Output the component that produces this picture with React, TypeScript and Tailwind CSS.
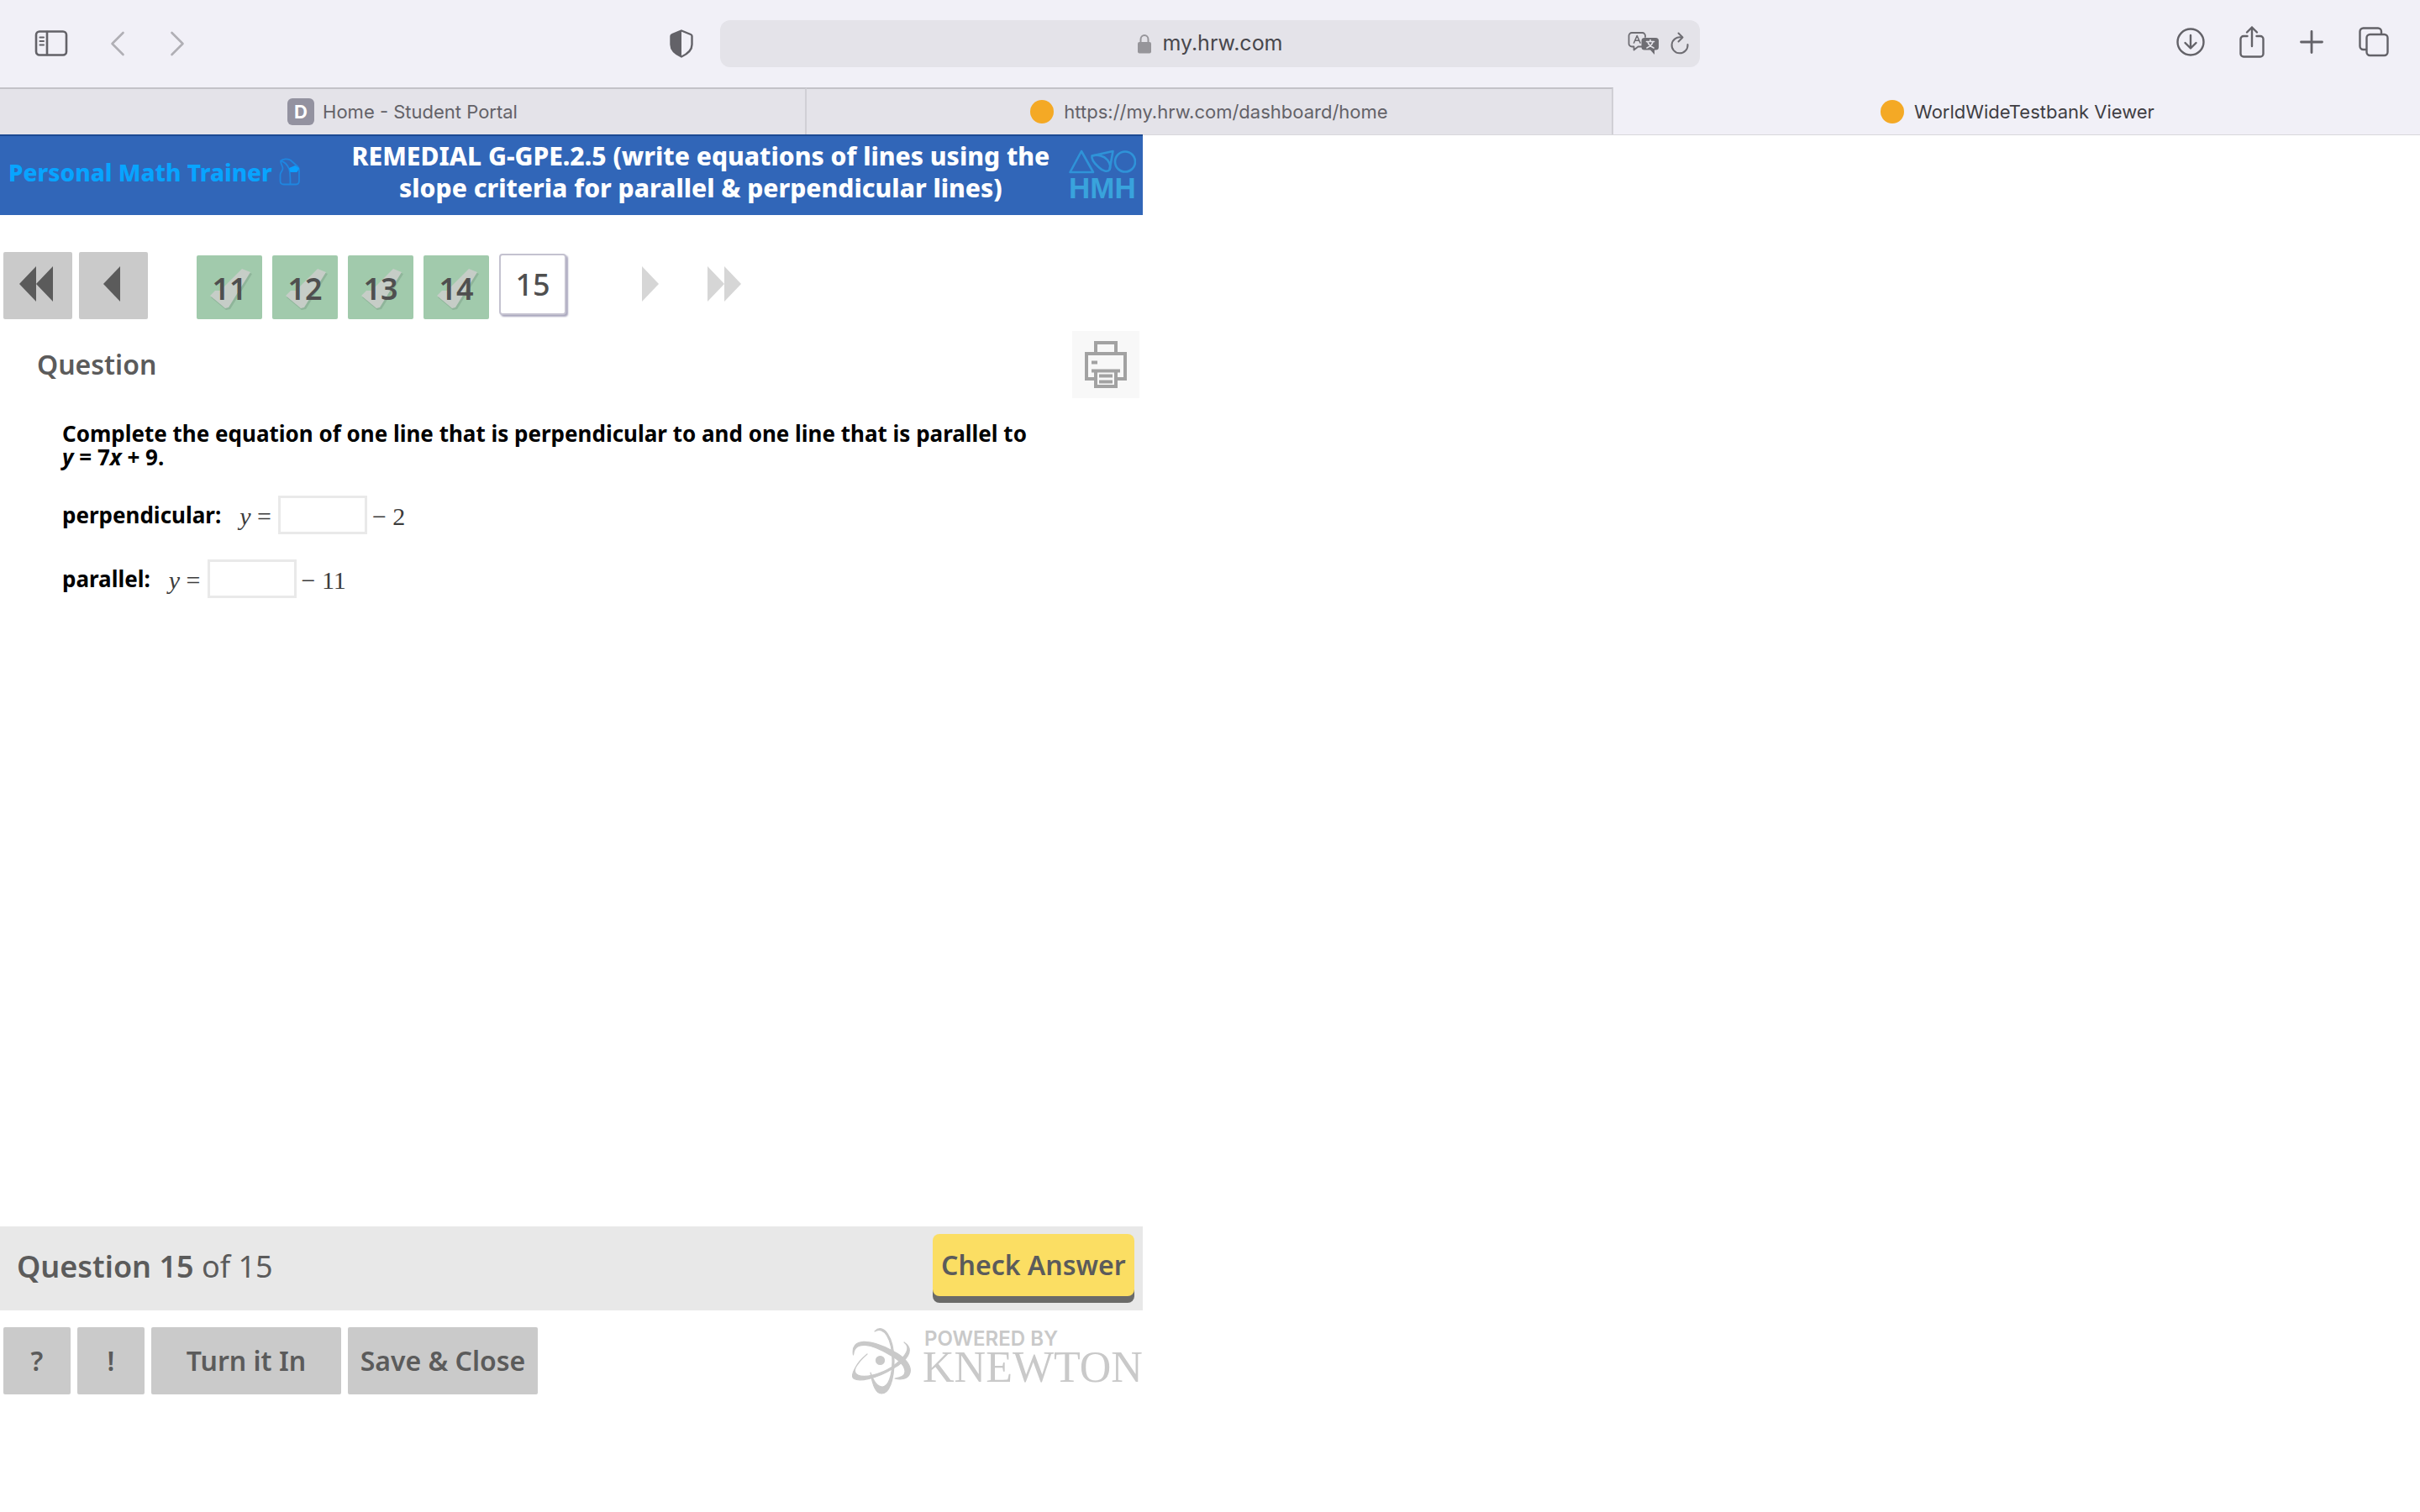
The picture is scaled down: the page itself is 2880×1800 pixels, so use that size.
import React from "react";

const doneQuestions = [11, 12, 13, 14];

function SidebarIcon() {
  return (
    <svg width="40" height="32" viewBox="0 0 40 32" fill="none" stroke="#636268" strokeWidth="2.6" strokeLinecap="round">
      <rect x="2" y="1.5" width="36" height="28" rx="4" />
      <path d="M15 2v27" />
      <path d="M6.500 8.500h4.500M6.500 13h4.500M6.500 17.500h4.500" strokeWidth="2" />
    </svg>
  );
}

function ShieldIcon() {
  return (
    <svg width="28" height="34" viewBox="0 0 28 34">
      <path d="M14 1.500 25 6c1 .4 1.500 1 1.500 2v10c0 7-6 11.500-12.500 14.500C7.500 29.500 1.500 25 1.500 18V8c0-1 .5-1.600 1.500-2z" fill="none" stroke="#636268" strokeWidth="2.4" />
      <path d="M14 1.500V32.500C7.500 29.500 1.500 25 1.500 18V8c0-1 .5-1.600 1.500-2z" fill="#636268" />
    </svg>
  );
}

function LockIcon() {
  return (
    <svg width="18" height="24" viewBox="0 0 18 24">
      <path d="M4.500 11V7a4.500 5 0 0 1 9 0v4" fill="none" stroke="#96959a" strokeWidth="2" />
      <rect x="1" y="10" width="16" height="13.500" rx="2" fill="#96959a" />
    </svg>
  );
}

function TranslateIcon() {
  return (
    <svg width="38" height="28" viewBox="0 0 38 28" fill="none" strokeLinecap="round" strokeLinejoin="round">
      <path d="M17 17.500h-4.500L7.500 21.500v-4H5a3.500 3.500 0 0 1-3.500-3.500V4.500A3.500 3.500 0 0 1 5 1h12.500A3.500 3.500 0 0 1 21 4.500V6" stroke="#6e6d73" strokeWidth="1.800" />
      <path d="M7.500 13 11.200 4.500 15 13M8.800 10.300h4.800" stroke="#6e6d73" strokeWidth="1.600" />
      <path d="M20 7h13.500A3.500 3.500 0 0 1 37 10.500V18a3.500 3.500 0 0 1-3.500 3.500H32V27l-5-5.500h-7a3.500 3.500 0 0 1-3.500-3.500v-7.500A3.500 3.500 0 0 1 20 7z" fill="#6e6d73" />
      <path d="M22.500 11.500h9M27 9.500v2M30 12c-1 3-3.500 5.500-7 7M24 12c1 3 3.500 5.500 7 7" stroke="#e4e3e9" strokeWidth="1.700" />
    </svg>
  );
}

function ReloadIcon() {
  return (
    <svg width="24" height="28" viewBox="0 0 24 28" fill="none" stroke="#6e6d73" strokeWidth="2" strokeLinecap="round" strokeLinejoin="round">
      <path d="M14 6.500A9.500 9.500 0 1 0 21.500 15" />
      <path d="M10.500 1.500 15.500 6.500 10.500 11.500" />
    </svg>
  );
}

function DownloadIcon() {
  return (
    <svg width="36" height="36" viewBox="0 0 36 36" fill="none" stroke="#636268" strokeWidth="2.400" strokeLinecap="round" strokeLinejoin="round">
      <circle cx="18" cy="18" r="15.500" />
      <path d="M18 10v15M11.500 19 18 25.500 24.500 19" />
    </svg>
  );
}

function ShareIcon() {
  return (
    <svg width="30" height="40" viewBox="0 0 30 40" fill="none" stroke="#636268" strokeWidth="2.400" strokeLinecap="round" strokeLinejoin="round">
      <path d="M9.500 13H5a3.500 3.500 0 0 0-3.500 3.500V34A3.500 3.500 0 0 0 5 37.500h20a3.500 3.500 0 0 0 3.500-3.500V16.500A3.500 3.500 0 0 0 25 13h-4.500" />
      <path d="M15 25V2.500M9 8.500l6-6 6 6" />
    </svg>
  );
}

function PlusIcon() {
  return (
    <svg width="28" height="28" viewBox="0 0 28 28" stroke="#636268" strokeWidth="2.800" strokeLinecap="round">
      <path d="M14 1.500v25M1.500 14h25" />
    </svg>
  );
}

function TabsIcon() {
  return (
    <svg width="36" height="36" viewBox="0 0 36 36" fill="none" stroke="#636268" strokeWidth="2.400" strokeLinejoin="round">
      <path d="M9 27H5.500A4 4 0 0 1 1.500 23V5.500a4 4 0 0 1 4-4H23a4 4 0 0 1 4 4V9" />
      <rect x="9.500" y="9" width="25" height="25" rx="4" />
    </svg>
  );
}

function Chevron({ d }: { d: string }) {
  return (
    <svg width="18" height="30" viewBox="0 0 18 30" fill="none" stroke="#b0afb5" strokeWidth="2.600" strokeLinecap="round" strokeLinejoin="round">
      <path d={d} />
    </svg>
  );
}

function TrainerIcon() {
  return (
    <svg width="26" height="34" viewBox="0 0 26 34" fill="none" stroke="#1f86e0" strokeWidth="1.800" strokeLinejoin="round">
      <path d="M2 3.500C5 1 10 1 13.500 2.500L22 10c1.500 1.500 2 3 2 5v12c0 3-1 4.500-3.500 4.500H5.500C3 31.500 1.500 30 1.500 27.500V20c0-3 3-4.500 3-7.500S2 7.500 2 3.500z" />
      <path d="M2 3.500c5 1 8 5 10 9.500 1.500 4 1.500 9 1.500 18" />
      <path d="M13 12.500 19 10l4 2.500-2 3.500h-7z" fill="#0aa0ff" stroke="#0aa0ff" />
    </svg>
  );
}

function HmhLogo() {
  return (
    <div className="flex flex-col items-center text-[#39a3dc]">
      <svg width="80" height="30" viewBox="0 0 80 30" fill="none" stroke="#2f93d8" strokeWidth="2.600" strokeLinejoin="round">
        <path d="M1.500 27 15 2l14 25z" />
        <path d="M27.500 7.500 52.500 2 48.500 24c-2.500 3-8 2-13-3-5-4.500-9-9.500-8-13.500z" />
        <path d="M27.500 7.500c7-2 14.500 0 18.500 5 3 4 4 8 2.500 11.500" />
        <circle cx="67" cy="14.500" r="12" />
      </svg>
      <span className="font-['Liberation_Sans',sans-serif] text-[35px] leading-8 font-bold">HMH</span>
    </div>
  );
}

function CheckMark() {
  return (
    <svg className="absolute inset-0 h-full w-full" viewBox="0 0 78 76">
      <path d="M17 50 24 45 30 46 56 18 66 22 40 64 35 65z" fill="#8fb59a" />
      <path d="M16 48 22 42 28 42 54 16 64 20 38 62 34 63z" fill="#c6cdc7" />
    </svg>
  );
}

function PrinterIcon() {
  return (
    <svg width="50" height="56" viewBox="0 0 50 56" fill="none" stroke="#a2a2a2" strokeWidth="4">
      <path d="M13 14V2h24v12" />
      <path d="M11 45H2V15h46v30h-9" />
      <path d="M8 35.500h34M13 36v18h24V36M17 41.500h16M17 48.500h16" />
      <path d="M8 25.500h7" />
    </svg>
  );
}

function KnewtonMark() {
  return (
    <svg width="72" height="80" viewBox="0 0 72 80" fill="#c9c9c9" stroke="#c9c9c9" strokeWidth="1.2" strokeLinejoin="round">
      <circle cx="33.500" cy="39.500" r="5" />
      <path d="M27 5C37-6 50 12 50 40c0 24-6 39-15 39-7 0-11-12-13-25 4 12 8 17 14 17 7 0 12-13 12-31C48 14 38-2 27 5z" />
      <path d="M1.500 33C-2 12 22 14 48 28c16 8 23 18 21 26-2 8-11 9-18 7 7-1 12-3 12-8 0-7-7-14-18-20C24 20 3 15 1.500 33z" />
      <path d="M18 32C5 43-2 57 1.500 60.500 7 66 30 61 49 49 64 41 76 27 62 18c8 6 4 16-14 29C34 56 15 61 7 57-1 53 5 43 18 32z" />
    </svg>
  );
}

function Arrow({ d, width, color, label, box }: { d: string; width: number; color: string; label: string; box: string }) {
  return (
    <button type="button" aria-label={label} className={`flex items-center justify-center rounded-xs pb-1 ${box}`}>
      <svg width={width} height="42" viewBox={`0 0 ${width} 42`} fill={color}>
        <path d={d} />
      </svg>
    </button>
  );
}

function AnswerRow({ id, label, tail }: { id: string; label: string; tail: string }) {
  return (
    <div className="flex h-[46px] items-center">
      <label htmlFor={id} className="text-[26px] leading-7 font-bold">{label}</label>
      <span className="ml-[22px] pt-1 font-['Liberation_Serif',serif] text-[30px] leading-8 text-[#3c3c3c]"><i>y</i> =</span>
      <input id={id} type="text" className="mr-1.5 ml-2 h-[46px] w-[106px] border-3 border-[#e9e9e9] bg-white px-2 text-[26px]" />
      <span className="pt-1 font-['Liberation_Serif',serif] text-[30px] leading-8 text-[#3c3c3c]">{tail}</span>
    </div>
  );
}

const greyButton = "flex h-20 items-center justify-center rounded-xs bg-[#cacaca] text-[32px] font-semibold text-[#5b5b5b]";

export default function App() {
  return (
    <div className="flex min-h-screen flex-col bg-white font-['Noto_Sans',sans-serif] text-black">
      <header className="bg-[#f1f0f7] font-['Inter',sans-serif]">
        <div className="grid h-[104px] grid-cols-[1fr_40.5%_1fr] items-center">
          <div className="flex items-center justify-between pr-8 pl-[41px]">
            <div className="flex items-center">
              <button type="button" aria-label="Show sidebar"><SidebarIcon /></button>
              <button type="button" aria-label="Back" className="ml-[50px]"><Chevron d="M15.500 2 2.500 15l13 13" /></button>
              <button type="button" aria-label="Forward" className="ml-[53px]"><Chevron d="M2.500 2l13 13-13 13" /></button>
            </div>
            <button type="button" aria-label="Privacy report"><ShieldIcon /></button>
          </div>
          <div className="grid h-14 grid-cols-[1fr_auto_1fr] items-center rounded-xl bg-[#e4e3e9] px-3">
            <span />
            <a href="#address" className="flex items-center gap-3 text-[25px] text-[#48474c]">
              <LockIcon />
              my.hrw.com
            </a>
            <div className="flex items-center justify-end gap-3">
              <button type="button" aria-label="Translate"><TranslateIcon /></button>
              <button type="button" aria-label="Reload"><ReloadIcon /></button>
            </div>
          </div>
          <div className="flex items-center justify-end pr-[37px] pb-1">
            <button type="button" aria-label="Downloads"><DownloadIcon /></button>
            <button type="button" aria-label="Share" className="ml-10"><ShareIcon /></button>
            <button type="button" aria-label="New tab" className="ml-[42px]"><PlusIcon /></button>
            <button type="button" aria-label="Show tabs" className="ml-[42px]"><TabsIcon /></button>
          </div>
        </div>
        <nav aria-label="Tabs" className="grid h-14 grid-cols-3 text-[22px] text-[#636268]">
          <a href="#portal" className="flex items-center justify-center gap-2.5 border-t-2 border-r-2 border-t-[#c3c2c8] border-r-[#d0cfd5] bg-[#e4e3e9]">
            <span className="flex size-8 items-center justify-center rounded-md bg-[#9392a0] font-bold text-white">D</span>
            Home - Student Portal
          </a>
          <a href="#dashboard" className="flex items-center justify-center gap-3 border-t-2 border-r-2 border-t-[#c3c2c8] border-r-[#d0cfd5] bg-[#e4e3e9]">
            <span className="size-7 rounded-full bg-[#f4a925]" />
            https://my.hrw.com/dashboard/home
          </a>
          <a href="#viewer" className="flex items-center justify-center gap-3 pt-0.5 pl-0.5 text-[#3f3e43]">
            <span className="size-7 rounded-full bg-[#f4a925]" />
            WorldWideTestbank Viewer
          </a>
        </nav>
      </header>

      <div className="flex flex-1 flex-col border-t border-[#d8d8db]">
        <main className="-mt-px flex w-[47.22%] flex-1 flex-col pb-[140px]">
          <div className="flex h-24 items-center border-t-2 border-[#1c4a93] bg-[#3166b8] pr-2 pl-2.5">
            <div className="flex items-center gap-2 pb-2 text-[28px] font-extrabold whitespace-nowrap text-[#08a4ff]">
              Personal Math Trainer
              <TrainerIcon />
            </div>
            <h1 className="mr-[18px] ml-auto w-[840px] pb-2 text-center text-[30px] leading-[38px] font-extrabold text-white">
              REMEDIAL G-GPE.2.5 (write equations of lines using the slope criteria for parallel &amp; perpendicular lines)
            </h1>
            <HmhLogo />
          </div>

          <nav aria-label="Questions" className="mt-11 flex h-20 items-center pl-1">
            <Arrow label="First" box="h-20 w-[82px] bg-[#cacaca] pr-1" width={40} color="#5b5b5b" d="M20 0v42L0 21zM40 0v42L20 21z" />
            <Arrow label="Previous" box="ml-2 h-20 w-[82px] bg-[#cacaca] pr-1" width={20} color="#5b5b5b" d="M20 0v42L0 21z" />
            <div className="ml-[58px] flex items-end gap-3 self-end text-[36px] text-[#4f4f4f]">
              {doneQuestions.map((n) => (
                <button type="button" key={n} className="relative h-[76px] w-[78px] rounded-xs bg-[#a1caac] pt-1 font-semibold">
                  <CheckMark />
                  <span className="relative">{n}</span>
                </button>
              ))}
              <button type="button" aria-current="page" className="mb-[5px] h-[73px] w-20 rounded-sm border-2 border-[#c4c2d0] bg-white font-medium shadow-[2px_2px_2px_#a9a6bd]">15</button>
            </div>
            <Arrow label="Next" box="ml-[90px]" width={20} color="#d6d6d6" d="M0 0v42l20-21z" />
            <Arrow label="Last" box="ml-[58px]" width={40} color="#d6d6d6" d="M0 0v42l20-21zM20 0v42l20-21z" />
          </nav>

          <div className="mt-3.5 flex items-center justify-between pr-1 pl-11">
            <h2 className="text-[32px] font-semibold text-[#5b5b5b]">Question</h2>
            <button type="button" aria-label="Print" className="flex size-20 items-center justify-center bg-[#f8f8f8]">
              <PrinterIcon />
            </button>
          </div>

          <section className="flex-1 pt-7 pl-[74px]">
            <p className="text-[26px] leading-7 font-bold">
              Complete the equation of one line that is perpendicular to and one line that is parallel to
              <br />
              <i>y</i> = 7<i>x</i> + 9.
            </p>
            <div className="mt-8 flex flex-col gap-[30px]">
              <AnswerRow id="perpendicular" label="perpendicular:" tail="− 2" />
              <AnswerRow id="parallel" label="parallel:" tail="− 11" />
            </div>
          </section>

          <div className="flex h-[100px] items-center justify-between bg-[#e8e8e8] pr-2.5 pl-5 text-[#5b5b5b]">
            <p className="pb-1 text-[36px]"><span className="font-semibold">Question 15</span> of 15</p>
            <button type="button" className="mb-2 h-[74px] w-60 rounded-lg bg-[#fbde63] text-[32px] font-semibold shadow-[0_8px_0_#6a6a68]">Check Answer</button>
          </div>

          <footer className="mt-5 flex items-center justify-between pl-1">
            <div className="flex gap-2">
              <button type="button" aria-label="Help" className={`${greyButton} w-20`}>?</button>
              <button type="button" aria-label="Report" className={`${greyButton} w-20`}>!</button>
              <button type="button" className={`${greyButton} w-[226px]`}>Turn it In</button>
              <button type="button" className={`${greyButton} w-[226px]`}>Save &amp; Close</button>
            </div>
            <div className="flex items-center gap-3 text-[#c9c9c9]">
              <KnewtonMark />
              <div className="flex flex-col pb-1">
                <span className="pl-0.5 font-['Inter',sans-serif] text-[24px] leading-5 font-semibold">POWERED BY</span>
                <span className="font-['Liberation_Serif',serif] text-[52px] leading-[48px]">KNEWTON</span>
              </div>
            </div>
          </footer>
        </main>
      </div>
    </div>
  );
}
